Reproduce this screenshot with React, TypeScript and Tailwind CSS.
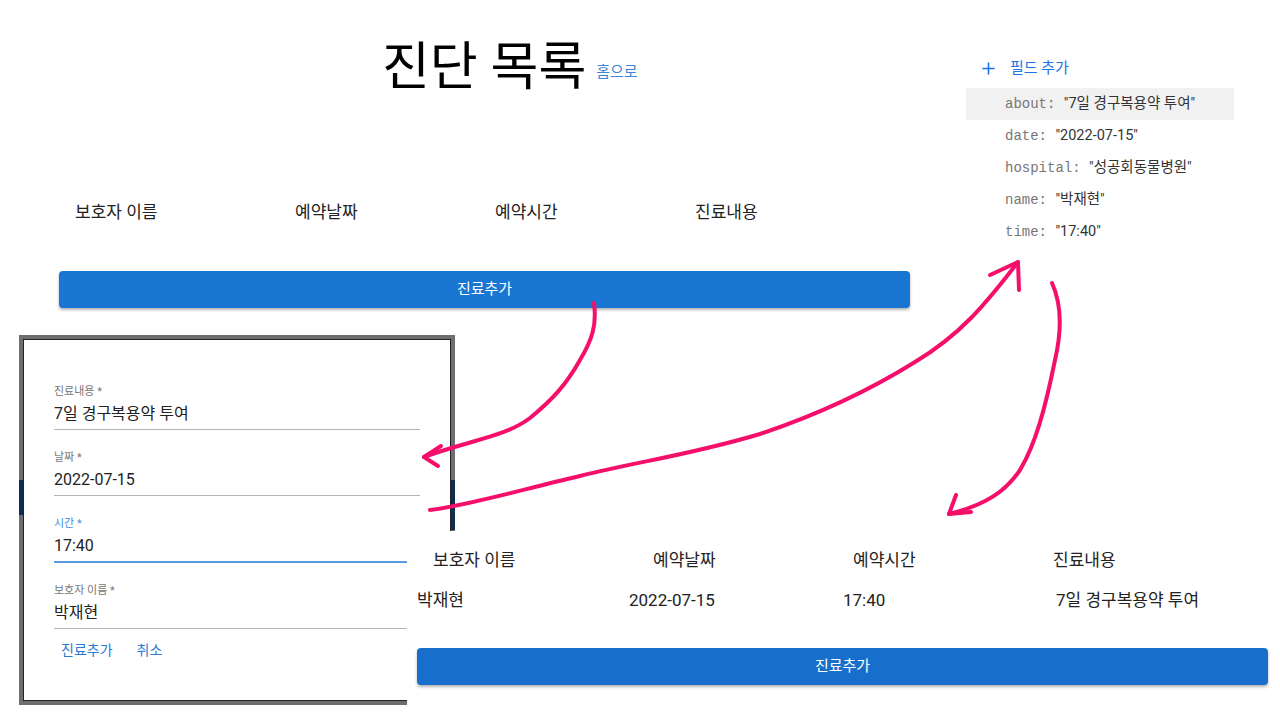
import React from 'react';
import { Plus } from 'lucide-react';

const font = { fontFamily: 'Roboto, "Noto Sans CJK KR", sans-serif' };

interface Field {
  label: string;
  value: string;
  focused?: boolean;
}

const fields: Field[] = [
  { label: '진료내용 *', value: '7일 경구복용약 투여' },
  { label: '날짜 *', value: '2022-07-15' },
  { label: '시간 *', value: '17:40', focused: true },
  { label: '보호자 이름 *', value: '박재현' },
];

const docRows = [
  { key: 'about', value: '"7일 경구복용약 투여"', active: true },
  { key: 'date', value: '"2022-07-15"' },
  { key: 'hospital', value: '"성공회동물병원"' },
  { key: 'name', value: '"박재현"' },
  { key: 'time', value: '"17:40"' },
];

function TableHeader() {
  return (
    <div className="flex h-[24px] items-center text-[17px] text-[#222]">
      <div className="w-[236px] pl-[16px]">보호자 이름</div>
      <div className="w-[200px]">예약날짜</div>
      <div className="w-[200px]">예약시간</div>
      <div className="flex-1">진료내용</div>
    </div>
  );
}

function AddButton({ className }: { className: string }) {
  return (
    <button
      className={`flex h-[37px] w-[851px] items-center justify-center rounded-[4px] text-[15px] text-white shadow-[0_2px_3px_rgba(0,0,0,0.3)] ${className}`}
    >
      진료추가
    </button>
  );
}

function Arrows() {
  return (
    <svg className="pointer-events-none absolute left-0 top-0" width="1280" height="720" fill="none">
      <g stroke="#f50f6a" strokeWidth="4" strokeLinecap="round" strokeLinejoin="round">
        <path d="M594 303 C597 325 592 340 580 360 C566 385 552 400 530 418 C505 437 470 440 424 457" />
        <path d="M441 446 L424 457 L438 466" />
        <path d="M430 510 C470 505 520 490 580 476 C640 461 690 455 760 434 C820 414 870 390 915 362 C960 335 985 305 1018 262" />
        <path d="M990 275 L1018 262 L1019 290" />
        <path d="M1052 283 C1062 305 1062 330 1055 360 C1045 410 1035 445 1020 470 C1005 492 985 505 949 514" />
        <path d="M956 495 L949 514 L971 512" />
      </g>
    </svg>
  );
}

export default function App() {
  return (
    <div className="relative h-[720px] w-[1280px] overflow-hidden bg-white" style={font}>
      {/* list page */}
      <div className="absolute left-0 top-0 w-[940px]">
        <div className="flex items-start gap-[10px] pl-[382px] pt-[34px]">
          <h1 className="text-[52px] leading-[68px] font-normal text-black">진단 목록</h1>
          <a className="mt-[27px] text-[15px] text-[#3a86d8]">홈으로</a>
        </div>
        <div className="ml-[59px] mt-[99px]">
          <TableHeader />
          <AddButton className="mt-[46px] bg-[#1976d2]" />
        </div>
      </div>

      {/* firestore document */}
      <div className="absolute left-[966px] top-[54px] w-[268px] text-[14.5px]">
        <div className="flex h-[28px] items-center gap-[12px] pl-[13px] text-[#1a73e8]">
          <Plus size={19} strokeWidth={2} />
          <span className="text-[15px]">필드 추가</span>
        </div>
        <div className="mt-[6px] flex flex-col">
          {docRows.map((r) => (
            <div
              key={r.key}
              className={`flex h-[32px] items-center pl-[39px] ${r.active ? 'bg-[#f1f1f1]' : ''}`}
            >
              <span className="text-[14px] text-[#777]" style={{ fontFamily: '"Liberation Mono", monospace' }}>
                {r.key}:&nbsp;
              </span>
              <span className="text-[#333]">{r.value}</span>
            </div>
          ))}
        </div>
      </div>

      {/* dialog screenshot */}
      <div className="absolute left-[19px] top-[335px] h-[370px] w-[436px] bg-[#6e6e6e] p-[4px]">
        <div className="absolute left-0 top-[145px] h-[35px] w-[4px] bg-[#0e2d52]" />
        <div className="absolute right-0 top-[145px] h-[50px] w-[4px] bg-[#0e2d52]" />
        <div className="h-full w-full border border-[#222] bg-white pl-[30px] pt-[45px]">
          <div className="flex w-[366px] flex-col gap-[21px]">
            {fields.map((f) => (
              <div key={f.label} className="flex flex-col">
                <div
                  className={`text-[11px] leading-[14px] ${f.focused ? 'text-[#3d8fe0]' : 'text-[#777]'}`}
                >
                  {f.label}
                </div>
                <div
                  className={`mt-[4px] pb-[4px] text-[16px] leading-[22px] text-[#222] ${
                    f.focused ? 'border-b-2 border-[#5a9be0]' : 'border-b border-[#b4b4b4]'
                  }`}
                >
                  {f.value}
                </div>
              </div>
            ))}
          </div>
          <div className="mt-[11px] flex gap-[24px] pl-[7px] text-[14px] text-[#2b7bd6]">
            <span>진료추가</span>
            <span>취소</span>
          </div>
        </div>
      </div>

      {/* list page after add */}
      <div className="absolute left-[407px] top-[531px] h-[189px] w-[873px] bg-white pl-[10px]">
        <div className="mt-[18px]">
          <TableHeader />
        </div>
        <div className="mt-[16px] flex h-[24px] items-center text-[17px] text-[#222]">
          <div className="w-[212px]">박재현</div>
          <div className="w-[214px]">2022-07-15</div>
          <div className="w-[213px]">17:40</div>
          <div className="flex-1">7일 경구복용약 투여</div>
        </div>
        <AddButton className="mt-[35px] bg-[#176ecb]" />
      </div>

      <Arrows />
    </div>
  );
}
